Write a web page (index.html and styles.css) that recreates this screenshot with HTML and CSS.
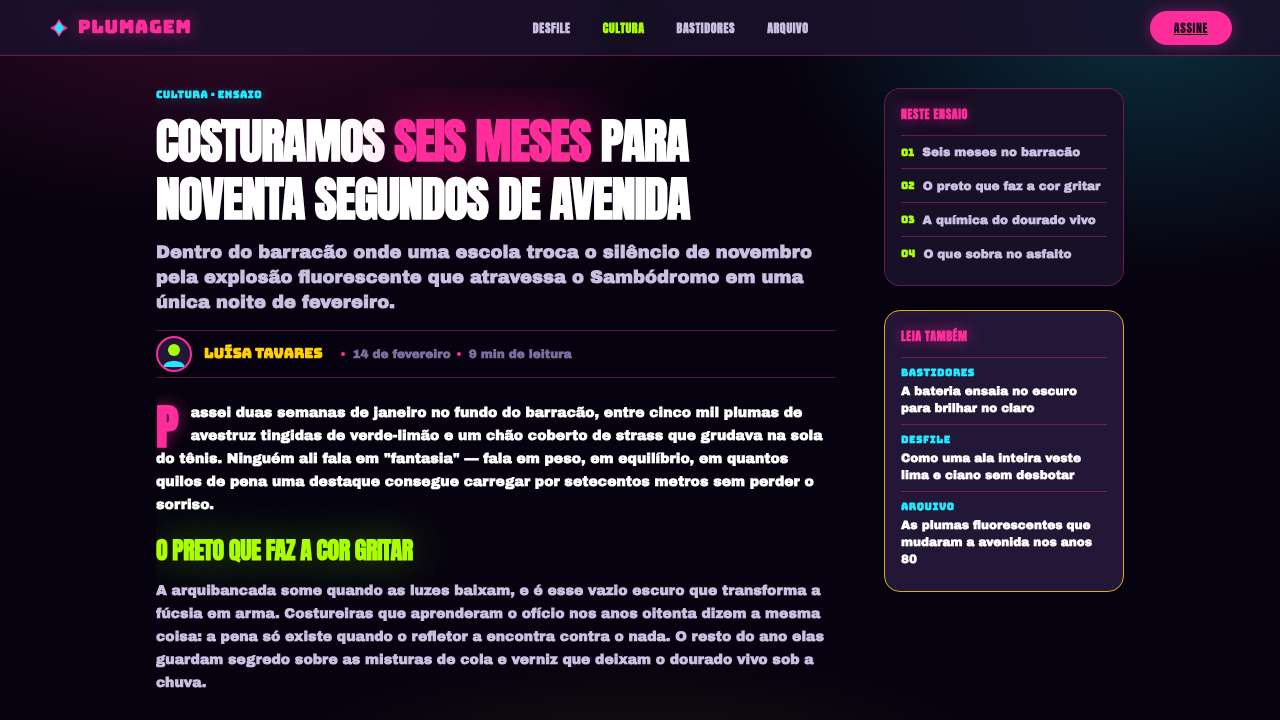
FILE: index.html
```
<!DOCTYPE html>
<html lang="pt-BR">
<head>
    <meta charset="UTF-8">
    <meta name="viewport" content="width=device-width, initial-scale=1.0">
    <title>Plumagem - Seis meses para noventa segundos</title>
    <link rel="stylesheet" href="styles.css">
</head>
<body>
    <header class="topbar">
        <a class="brand" href="#">
            <svg class="brand-mark" viewBox="0 0 22 22" aria-hidden="true">
                <path d="M11 2 L14.5 7.5 L20 11 L14.5 14.5 L11 20 L7.5 14.5 L2 11 L7.5 7.5 Z" fill="#ff2d9b"/>
                <path d="M11 4.5 L13.5 8 L16 11 L13.5 14 L11 17.5 L8.5 14 L6 11 L8.5 8 Z" fill="#1de9ff"/>
            </svg>
            <span>Plumagem</span>
        </a>
        <nav class="menu">
            <a href="#">Desfile</a>
            <a href="#" class="active">Cultura</a>
            <a href="#">Bastidores</a>
            <a href="#">Arquivo</a>
        </nav>
        <a class="subscribe" href="#">Assine</a>
    </header>

    <main class="layout">
        <article class="story">
            <p class="kicker">Cultura · Ensaio</p>
            <h1>Costuramos <em>seis meses</em> para noventa segundos de avenida</h1>
            <p class="lead">Dentro do barracão onde uma escola troca o silêncio de novembro pela explosão fluorescente que atravessa o Sambódromo em uma única noite de fevereiro.</p>

            <div class="byline">
                <svg class="avatar" viewBox="0 0 36 36" aria-hidden="true">
                    <circle cx="18" cy="18" r="17" fill="#231738"/>
                    <circle cx="18" cy="14" r="6" fill="#aaff00"/>
                    <path d="M7 31 C8 27 12 25 18 25 C24 25 28 27 29 31 Z" fill="#1de9ff"/>
                    <circle cx="18" cy="18" r="17" fill="none" stroke="#ff2d9b" stroke-width="2"/>
                </svg>
                <a class="author" href="#">Luísa Tavares</a>
                <span class="meta"><span>14 de fevereiro</span><span>9 min de leitura</span></span>
            </div>

            <p class="opening">Passei duas semanas de janeiro no fundo do barracão, entre cinco mil plumas de avestruz tingidas de verde-limão e um chão coberto de strass que grudava na sola do tênis. Ninguém ali fala em "fantasia" — fala em peso, em equilíbrio, em quantos quilos de pena uma destaque consegue carregar por setecentos metros sem perder o sorriso.</p>

            <h2>O preto que faz a cor gritar</h2>
            <p class="body-text">A arquibancada some quando as luzes baixam, e é esse vazio escuro que transforma a fúcsia em arma. Costureiras que aprenderam o ofício nos anos oitenta dizem a mesma coisa: a pena só existe quando o refletor a encontra contra o nada. O resto do ano elas guardam segredo sobre as misturas de cola e verniz que deixam o dourado vivo sob a chuva.</p>
        </article>

        <aside class="sidebar">
            <section class="card">
                <h3>Neste ensaio</h3>
                <ol class="toc">
                    <li><a href="#"><b>01</b>Seis meses no barracão</a></li>
                    <li><a href="#"><b>02</b>O preto que faz a cor gritar</a></li>
                    <li><a href="#"><b>03</b>A química do dourado vivo</a></li>
                    <li><a href="#"><b>04</b>O que sobra no asfalto</a></li>
                </ol>
            </section>

            <section class="card card-gold">
                <h3>Leia também</h3>
                <ul class="related">
                    <li><span class="tag">Bastidores</span><a href="#">A bateria ensaia no escuro para brilhar no claro</a></li>
                    <li><span class="tag">Desfile</span><a href="#">Como uma ala inteira veste lima e ciano sem desbotar</a></li>
                    <li><span class="tag">Arquivo</span><a href="#">As plumas fluorescentes que mudaram a avenida nos anos 80</a></li>
                </ul>
            </section>
        </aside>
    </main>
</body>
</html>
```
FILE: styles.css
```
/* ===== Base ===== */
:root {
    --pink: #ff2d9b;
    --lime: #aaff00;
    --cyan: #1de9ff;
    --gold: #ffd000;
    --soft: #c9bfe0;
    --muted: #7b6f9e;
    --line: rgba(255, 45, 155, 0.35);
    --display: Anton, "Liberation Sans Narrow", "Liberation Sans", sans-serif;
    --label: Bungee, Inter, sans-serif;
    --text: "Archivo Black", Inter, sans-serif;
}

* {
    box-sizing: border-box;
}

body {
    margin: 0;
    min-height: 100vh;
    background:
        radial-gradient(ellipse 500px 220px at 18% 0, rgba(255, 45, 155, 0.18), transparent),
        radial-gradient(ellipse 380px 280px at 90% 0, rgba(29, 233, 255, 0.2), transparent),
        radial-gradient(ellipse 380px 140px at 50% 110%, rgba(170, 208, 0, 0.1), transparent),
        #07020f;
    color: white;
    font-family: var(--text);
    font-weight: 700;
    text-rendering: geometricPrecision;
}

a {
    color: inherit;
    text-decoration: none;
}

h1, h2, h3, p, ol, ul {
    margin: 0;
    padding: 0;
}

ol, ul {
    list-style: none;
}

/* ===== Top bar ===== */
.topbar {
    display: flex;
    justify-content: space-between;
    align-items: center;
    height: 56px;
    padding: 0 48px;
    background: rgba(26, 18, 44, 0.85);
    border-bottom: 1px solid var(--line);
    backdrop-filter: blur(12px);
}

.brand {
    display: flex;
    align-items: center;
    gap: 8px;
    color: var(--pink);
    font-family: var(--label);
    font-size: 18px;
    letter-spacing: 0.05em;
    line-height: 25px;
    text-transform: uppercase;
    text-shadow: 0 0 16px rgba(255, 45, 155, 0.5);
}

.brand-mark {
    width: 22px;
    height: 22px;
}

.menu {
    display: flex;
    gap: 32px;
    color: var(--soft);
    font-family: var(--display);
    font-size: 12px;
    letter-spacing: 0.05em;
    text-transform: uppercase;
}

.menu .active {
    color: var(--lime);
    text-shadow: 0 0 48px rgba(170, 255, 0, 0.4);
}

.subscribe {
    padding: 0 24px;
    border-radius: 17px;
    background: var(--pink);
    box-shadow: 0 0 16px rgba(255, 45, 155, 0.4);
    color: #07020f;
    font-family: var(--display);
    font-size: 12px;
    font-weight: 400;
    letter-spacing: 0.05em;
    line-height: 34px;
    text-decoration: underline;
    text-transform: uppercase;
}

/* ===== Layout ===== */
.layout {
    display: grid;
    grid-template-columns: 1fr 240px;
    gap: 48px;
    align-items: start;
    max-width: 968px;
    margin: 32px auto 0;
    will-change: transform;
}

/* ===== Story ===== */
.story {
    overflow: clip;
}

.kicker {
    color: var(--cyan);
    font-family: var(--label);
    font-size: 10px;
    letter-spacing: 0.05em;
    line-height: 13px;
    text-transform: uppercase;
    text-shadow: 0 0 16px rgba(29, 233, 255, 0.4);
}

h1 {
    margin-top: 11px;
    font-family: var(--display);
    font-size: 48px;
    letter-spacing: -0.02em;
    line-height: 58px;
    text-transform: uppercase;
}

h1 em {
    color: var(--pink);
    font-style: normal;
    text-shadow: 0 0 64px rgba(255, 45, 155, 0.5);
}

.lead {
    margin-top: 12px;
    color: var(--soft);
    font-size: 18px;
    line-height: 25px;
}

.byline {
    display: flex;
    align-items: center;
    height: 48px;
    margin-top: 15px;
    border-top: 1px solid var(--line);
    border-bottom: 1px solid var(--line);
}

.avatar {
    width: 36px;
    height: 36px;
    margin-right: 12px;
}

.author {
    color: var(--gold);
    font-family: var(--label);
    font-size: 14px;
    line-height: 19px;
    text-transform: uppercase;
}

.meta {
    display: flex;
    gap: 6px;
    margin-left: 18px;
    color: var(--muted);
    font-size: 12px;
}

.meta span {
    display: flex;
    align-items: center;
    gap: 8px;
}

.meta span::before {
    content: "";
    width: 4px;
    height: 4px;
    border-radius: 50%;
    background: var(--pink);
}

.opening, .body-text {
    font-size: 14px;
    line-height: 23px;
}

.opening {
    margin-top: 23px;
}

.opening::first-letter {
    float: left;
    margin-top: 6px;
    margin-right: 12px;
    color: var(--pink);
    font-family: var(--display);
    font-size: 48px;
    line-height: 40px;
    text-shadow: 0 0 16px rgba(255, 45, 155, 0.5);
}

h2 {
    margin-top: 17px;
    color: var(--lime);
    font-family: var(--display);
    font-size: 24px;
    letter-spacing: -0.02em;
    line-height: 34px;
    text-transform: uppercase;
    text-shadow: 0 0 48px rgba(170, 255, 0, 0.5);
}

.body-text {
    margin-top: 12px;
    color: var(--soft);
}

/* ===== Sidebar ===== */
.sidebar {
    display: grid;
    gap: 24px;
}

.card {
    padding: 16px 16px 15px;
    border: 1px solid var(--line);
    border-radius: 16px;
    background: #171026;
}

.card-gold {
    padding-bottom: 16px;
    border-color: #d9ae24;
    background: #231738;
}

h3 {
    margin-bottom: 12px;
    color: var(--pink);
    font-family: var(--display);
    font-size: 12px;
    letter-spacing: 0.05em;
    line-height: 18px;
    text-transform: uppercase;
    text-shadow: 0 0 16px rgba(255, 45, 155, 0.6);
}

.toc li, .related li {
    border-top: 1px solid var(--line);
}

.toc a {
    display: flex;
    align-items: center;
    gap: 8px;
    height: 32px;
    color: var(--soft);
    font-size: 12px;
}

.toc li + li a {
    height: 33px;
}

.toc b {
    color: var(--lime);
    font-family: var(--label);
    font-size: 10px;
}

.related li {
    padding: 8px 0 7px;
    font-size: 12px;
    line-height: 17px;
}

.related a {
    display: block;
}

.tag {
    display: block;
    margin-bottom: 4px;
    color: var(--cyan);
    font-family: var(--label);
    font-size: 10px;
    letter-spacing: 0.05em;
    line-height: 13px;
    text-transform: uppercase;
}
```
